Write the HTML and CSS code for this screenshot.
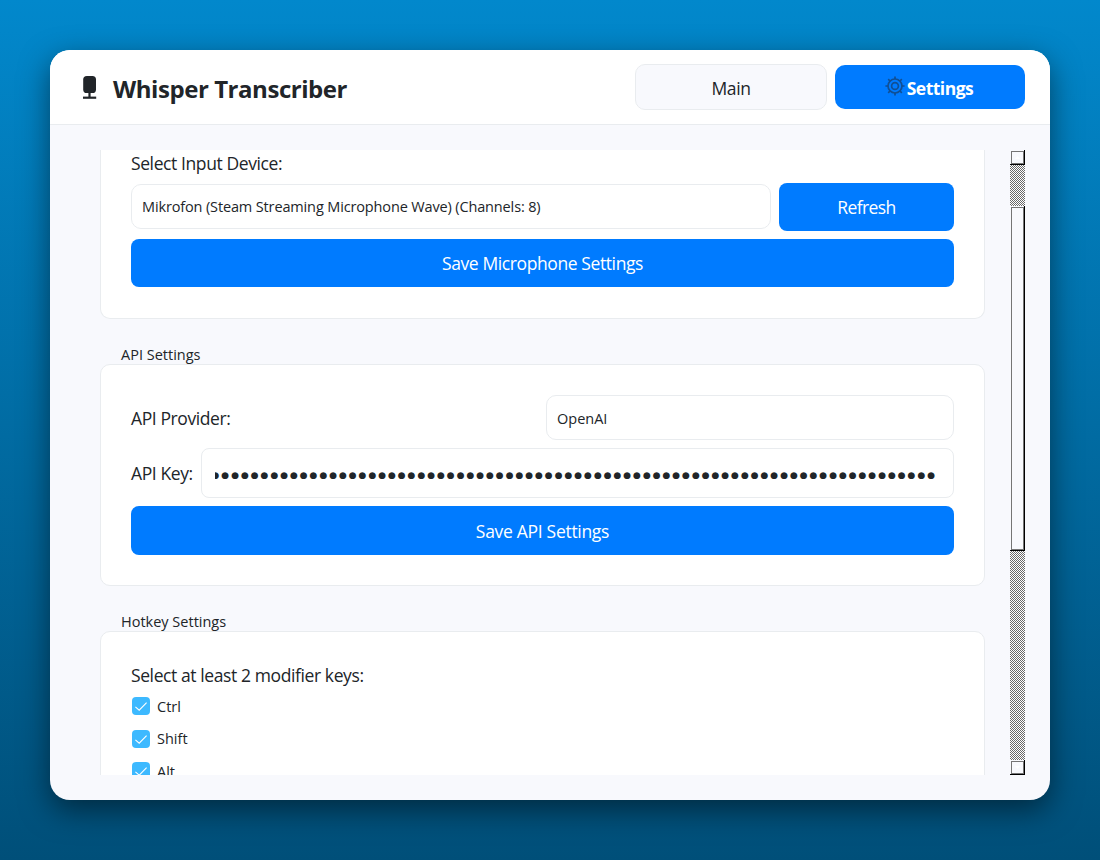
FILE: index.html
```html
<!DOCTYPE html>
<html lang="en">
<head>
<meta charset="utf-8">
<title>Whisper Transcriber</title>
<link rel="stylesheet" href="styles.css">
</head>
<body>
<div class="window">
  <header class="header">
    <svg class="mic" viewBox="0 0 16 26"><rect x="1.2" y="1" width="12.8" height="17" rx="3.6"/><rect x="6.4" y="17" width="2.2" height="5.5"/><rect x="1" y="21.6" width="13.2" height="2.2"/></svg>
    <h1 class="title">Whisper Transcriber</h1>
    <nav class="tabs">
      <button class="tab"><span class="t-main">Main</span></button>
      <button class="tab active">
        <svg class="gear" viewBox="0 0 20 20"><circle cx="10" cy="10" r="7"/><circle cx="10" cy="10" r="3.4"/><path d="M10 3V.4M10 17v2.6M3 10H.4M17 10h2.6M5 5 3.2 3.2M15 5l1.8-1.8M5 15l-1.8 1.8M15 15l1.8 1.8"/></svg>
        <span class="t-settings">Settings</span>
      </button>
    </nav>
  </header>
  <main class="body">
    <div class="scroll">
      <section class="card mic-card">
        <div class="label l-device">Select Input Device:</div>
        <div class="device-row">
          <div class="select"><span class="t-device">Mikrofon (Steam Streaming Microphone Wave) (Channels: 8)</span></div>
          <button class="btn"><span class="t-refresh">Refresh</span></button>
        </div>
        <button class="btn"><span class="t-savemic">Save Microphone Settings</span></button>
      </section>
      <h2 class="group t-api">API Settings</h2>
      <section class="card api-card">
        <div class="provider-row">
          <div class="label l-provider">API Provider:</div>
          <div class="select"><span class="t-openai">OpenAI</span></div>
        </div>
        <div class="key-row">
          <div class="label l-key">API Key:</div>
          <div class="input"><div class="dots"><span>●●●●●●●●●●●●●●●●●●●●●●●●●●●●●●●●●●●●●●●●●●●●●●●●●●●●●●●●●●●●●●●●●●●●●●●●●●</span></div></div>
        </div>
        <button class="btn btn-api"><span class="t-saveapi">Save API Settings</span></button>
      </section>
      <h2 class="group t-hotkey">Hotkey Settings</h2>
      <section class="card hot-card">
        <div class="label l-keys">Select at least 2 modifier keys:</div>
        <div class="check"><svg class="box" viewBox="0 0 18 18"><path d="M3.4 9.8 7.2 13.2l7.4-7.6"/></svg><span class="t-ctrl">Ctrl</span></div>
        <div class="check"><svg class="box" viewBox="0 0 18 18"><path d="M3.4 9.8 7.2 13.2l7.4-7.6"/></svg><span class="t-shift">Shift</span></div>
        <div class="check"><svg class="box" viewBox="0 0 18 18"><path d="M3.4 9.8 7.2 13.2l7.4-7.6"/></svg><span class="t-alt">Alt</span></div>
      </section>
    </div>
    <div class="scrollbar">
      <div class="bar-part arrow"><svg class="tri" viewBox="0 0 5 3"><path d="M0 3 2.5 0 5 3z"/></svg></div>
      <div class="track-top"></div>
      <div class="bar-part thumb"></div>
      <div class="track-bottom"></div>
      <div class="bar-part arrow"><svg class="tri" viewBox="0 0 5 3"><path d="M0 0 2.5 3 5 0z"/></svg></div>
    </div>
  </main>
</div>
</body>
</html>
```
FILE: styles.css
```css
* { box-sizing: border-box; }
body {
  margin: 0;
  width: 1100px;
  height: 860px;
  padding: 50px;
  overflow: hidden;
  background: linear-gradient(#0288cc, #004f79);
  font-family: "Open Sans", "Noto Sans", sans-serif;
  color: #212529;
}
button { font: inherit; border: 0; padding: 0; }
.window {
  height: 750px;
  border-radius: 20px;
  background: #f8f9fd;
  box-shadow: 0 10px 30px rgba(0, 0, 0, .5);
  display: flex;
  flex-direction: column;
  overflow: hidden;
}
.header {
  height: 75px;
  flex: none;
  display: flex;
  align-items: center;
  padding: 0 25px 1px 32px;
  background: #fff;
  border-bottom: 1px solid #e9ecef;
}
.mic { width: 16px; height: 26px; fill: #212529; margin-top: 3px; }
.title { margin: 5px 0 0 15px; font-size: 24px; line-height: 34px; font-weight: 700; letter-spacing: -.45px; white-space: nowrap; }
.tabs { display: flex; gap: 8px; margin-left: auto; }
.tab {
  width: 192px;
  height: 46px;
  border: 1px solid #e9ecef;
  border-radius: 10px;
  background: #f8f9fd;
  color: #212529;
  font-size: 17.5px;
  letter-spacing: -.4px;
  padding-top: 2px;
  display: flex;
  align-items: center;
  justify-content: center;
}
.tab.active { width: 190px; height: 44px; margin-top: 1px; border: 0; background: #007bff; color: #fff; font-weight: 700; gap: 2px; padding-right: 2px; }
.t-settings { letter-spacing: -.5px; }
.gear { width: 20px; height: 20px; margin-top: -4px; fill: none; stroke: #104f94; stroke-width: 1.7; }
.body { flex: 1; display: flex; justify-content: space-between; padding: 25px 25px 25px 50px; }
.scroll { width: 885px; height: 625px; overflow: hidden; }
.card { flex: none; background: #fff; border: 1px solid #e9ecef; border-radius: 10px; padding: 30px; display: flex; flex-direction: column; gap: 8px; }
.mic-card { height: 169px; border-top: 0; border-radius: 0 0 10px 10px; padding-top: 0; }
.label { font-size: 17.5px; line-height: 25px; letter-spacing: -.4px; white-space: nowrap; }
.l-device { height: 25px; line-height: 27px; }
.l-provider { padding-top: 2px; }
.device-row { display: grid; grid-template-columns: 640px 175px; gap: 8px; height: 48px; }
.device-row .select { margin-top: 1px; }
.select { height: 45px; border: 1px solid #e9ecef; border-radius: 10px; padding-left: 10px; display: flex; align-items: center; font-size: 14.5px; white-space: nowrap; }
.t-device { letter-spacing: -.14px; }
.t-openai { padding-top: 1px; }
.btn { height: 48px; flex: none; border-radius: 8px; background: #007bff; color: #fff; font-size: 17.5px; letter-spacing: -.4px; }
.btn-api { height: 49px; padding-top: 1px; letter-spacing: -.3px; }
.t-refresh { letter-spacing: -.6px; }
.group { margin: 25px 0 0 21px; height: 20px; font-size: 14.5px; line-height: 22px; font-weight: 400; white-space: nowrap; }
.api-card { height: 222px; }
.provider-row { display: grid; grid-template-columns: 415px 1fr; align-items: center; }
.key-row { display: flex; align-items: center; gap: 8px; height: 50px; }
.key-row .label { width: 62px; }
.input { flex: 1; height: 50px; border: 1px solid #e9ecef; border-radius: 8px; padding: 0 13px; display: flex; align-items: center; }
.dots { width: 722px; display: flex; justify-content: flex-end; overflow: hidden; font: 9px/20px "DejaVu Sans", sans-serif; letter-spacing: 1.95px; margin-top: 4px; }
.hot-card { height: 300px; gap: 0; }
.l-keys { padding-top: 1px; margin-bottom: 2px; }
.check { display: flex; align-items: center; gap: 7px; padding-left: 1px; height: 32.5px; font-size: 14.5px; }
.l-keys + .check { margin-top: 0; }
.box { width: 18px; height: 18px; border-radius: 4px; background: #3db9ff; fill: none; stroke: #fff; stroke-width: 1.1; }
.scrollbar { width: 15px; height: 625px; display: flex; flex-direction: column; background: #f8f9fd; }
.bar-part { position: relative; border-right: 1px solid #000; border-bottom: 1px solid #000; }
.bar-part::before { content: ""; position: absolute; inset: 1px 0 0 1px; border: 1px solid #757575; background: #f8f9fd; }
.arrow { height: 15px; }
.tri { position: absolute; left: 5px; top: 6px; width: 5px; height: 3px; fill: #fff; }
.thumb { height: 345px; }
.track-top { height: 41px; }
.track-bottom { flex: 1; }
.track-top, .track-bottom { background: repeating-conic-gradient(#696969 0 25%, #fff 0 50%) 0 0 / 2px 2px; }
```
